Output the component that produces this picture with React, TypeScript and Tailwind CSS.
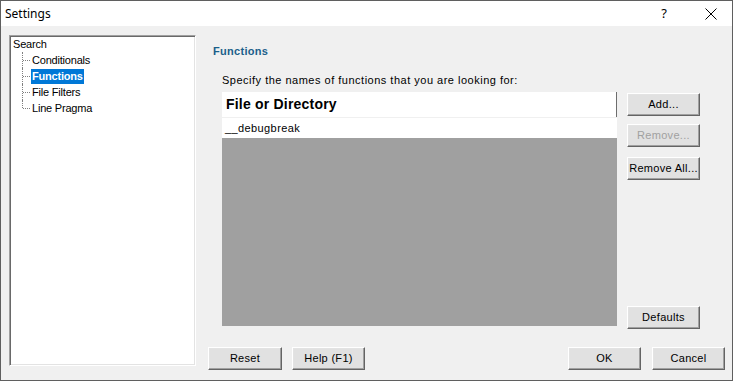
import React from "react";

const font = { fontFamily: '"Liberation Sans", Arial, sans-serif' };

function Btn({ label, disabled, w = "w-[73px]" }: { label: string; disabled?: boolean; w?: string }) {
  return (
    <div
      className={`${w} h-[23px] flex items-center justify-center text-[11px] tracking-[0.3px] bg-[#e1e1e1] border border-t-white border-l-white border-r-[#646464] border-b-[#646464] shadow-[inset_-1px_-1px_0_#a0a0a0,inset_1px_1px_0_#e3e3e3] ${disabled ? "text-[#a0a0a0]" : "text-black"}`}
    >
      {label}
    </div>
  );
}

function TreeItem({ label, selected, last }: { label: string; selected?: boolean; last?: boolean }) {
  return (
    <div className="relative h-[16px] flex items-center pl-[18px]">
      <div className={`absolute left-[9px] top-0 ${last ? "h-[8px]" : "h-[16px]"} border-l border-dotted border-[#808080]`} />
      <div className="absolute left-[10px] top-[8px] w-[7px] border-t border-dotted border-[#808080]" />
      <span
        className={`px-[1px] leading-[15px] tracking-[-0.2px] ${selected ? "bg-[#0078d7] text-white font-bold" : "text-black"}`}
      >
        {label}
      </span>
    </div>
  );
}

export default function App() {
  return (
    <div
      className="w-[733px] h-[381px] border border-[#5f5f5f] bg-[#f0f0f0] flex flex-col overflow-hidden"
      style={font}
    >
      {/* Title bar */}
      <div className="h-[25px] bg-white flex items-center shrink-0">
        <span
          className="ml-[4px] text-[12px] text-black"
          style={{ fontFamily: '"Noto Sans", "Open Sans", sans-serif' }}
        >
          Settings
        </span>
        <div className="flex-1" />
        <span
          className="text-[13px] text-black mr-[38px]"
          style={{ fontFamily: '"Noto Sans", sans-serif' }}
        >
          ?
        </span>
        <svg width="12" height="12" viewBox="0 0 12 12" className="mr-[15px]">
          <path d="M0.5 0.5 L11.5 11.5 M11.5 0.5 L0.5 11.5" stroke="#000" strokeWidth="1" />
        </svg>
      </div>

      {/* Body */}
      <div className="flex flex-1 pl-[8px] pr-[7px] pt-[9px]">
        {/* Tree */}
        <div className="w-[187px] h-[331px] bg-white border border-t-[#a0a0a0] border-l-[#a0a0a0] border-r-white border-b-white shadow-[inset_1px_1px_0_#696969,inset_-1px_-1px_0_#e3e3e3] text-[11px] pl-[3px]">
          <div className="h-[16px] flex items-center tracking-[-0.2px]">Search</div>
          <TreeItem label="Conditionals" />
          <TreeItem label="Functions" selected />
          <TreeItem label="File Filters" />
          <TreeItem label="Line Pragma" last />
        </div>

        {/* Right column */}
        <div className="flex-1 ml-[12px] flex flex-col">
          <div className="pl-[5px] pt-[8px] h-[38px] text-[11px] font-bold tracking-[0.3px] text-[#1b5f8a]">Functions</div>
          <div className="pl-[14px] text-[11px] h-[15px] leading-[15px] tracking-[0.5px] text-black">
            Specify the names of functions that you are looking for:
          </div>
          <div className="flex pl-[14px] mt-[4px]">
            {/* Table */}
            <div className="w-[395px] h-[234px] bg-[#a0a0a0] flex flex-col">
              <div className="h-[25px] bg-white flex items-center border-r border-[#6d6d6d] pl-[4px] text-[14px] font-bold tracking-[0.2px] text-black">
                File or Directory
              </div>
              <div className="h-[21px] bg-white flex items-center pl-[3px] text-[11px] tracking-[0.4px] text-black border-t border-[#f0f0f0]">
                __debugbreak
              </div>
            </div>
            {/* Side buttons */}
            <div className="ml-[10px] flex flex-col pt-[1px]">
              <Btn label="Add..." />
              <div className="h-[8px]" />
              <Btn label="Remove..." disabled />
              <div className="h-[10px]" />
              <Btn label="Remove All..." />
              <div className="flex-1" />
              <div className="mb-[-3px]">
                <Btn label="Defaults" />
              </div>
            </div>
          </div>
          {/* Bottom row */}
          <div className="flex mt-[21px]">
            <Btn label="Reset" w="w-[74px]" />
            <div className="w-[10px]" />
            <Btn label="Help (F1)" />
            <div className="flex-1" />
            <Btn label="OK" />
            <div className="w-[11px]" />
            <Btn label="Cancel" />
          </div>
        </div>
      </div>
    </div>
  );
}
